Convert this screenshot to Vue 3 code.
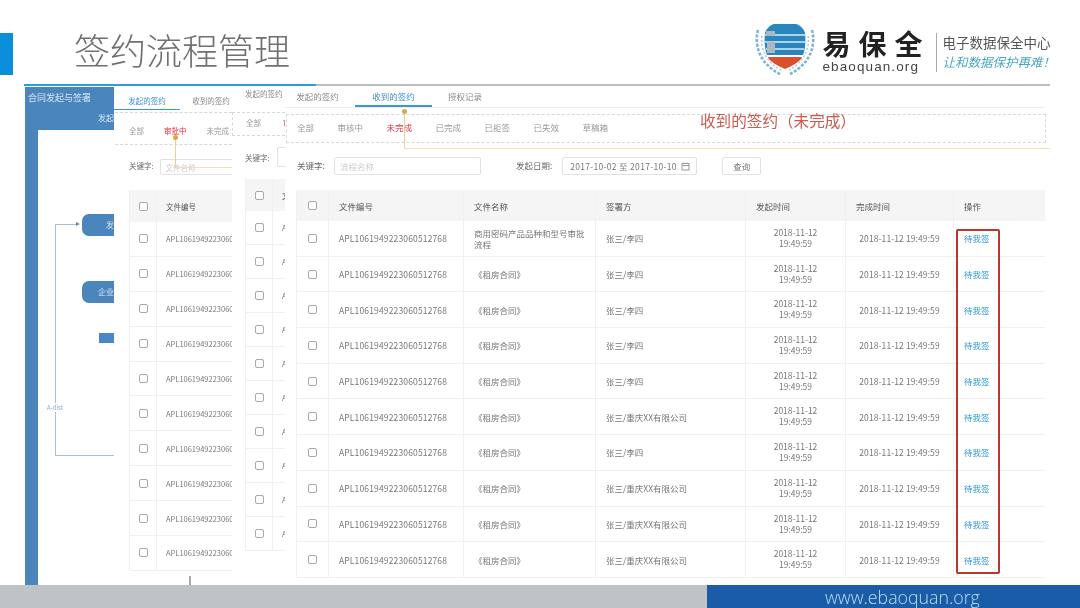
<script setup>
const ids = 'APL1061949223060512768'
const shortId = 'APL1061949223060'
const company = '张三/重庆XX有限公司'
const people = '张三/李四'

const filters = ['全部', '审核中', '未完成', '已完成', '已拒签', '已失效', '草稿箱']

const rows = [
  { name: '商用密码产品品种和型号审批流程', signer: people },
  { name: '《租房合同》', signer: people },
  { name: '《租房合同》', signer: people },
  { name: '《租房合同》', signer: people },
  { name: '《租房合同》', signer: people },
  { name: '《租房合同》', signer: company },
  { name: '《租房合同》', signer: people },
  { name: '《租房合同》', signer: company },
  { name: '《租房合同》', signer: company },
  { name: '《租房合同》', signer: company }
]
</script>

<template>
  <div class="slide">
    <header class="top">
      <div class="mark"></div>
      <h1 class="title">签约流程管理</h1>
      <div class="logo">
        <svg class="emblem" width="62" height="54" viewBox="0 0 62 54">
          <g fill="none" stroke="#7fb2d6" stroke-width="2.6" stroke-dasharray="3 1.6">
            <path d="M4 8 C0 24 6 42 26 52" />
            <path d="M58 8 C62 24 56 42 36 52" />
          </g>
          <g fill="none" stroke="#a9cbe2" stroke-width="1.6" stroke-dasharray="2 2">
            <path d="M8 14 C6 26 12 40 27 48" />
            <path d="M54 14 C56 26 50 40 35 48" />
          </g>
          <path d="M20 2 H42 C46 3 50 7 51 11 C52 20 51 28 49 33 H13 C11 28 10 20 11 11 C12 7 16 3 20 2 Z" fill="#2a86bf" />
          <path d="M11 13 H51 M11 20 H51 M12 27 H50" stroke="#d9edf7" stroke-width="1.6" />
          <path d="M12 9 H21 V14 H12 Z M13 20 H21 V31 H13 Z" fill="#a9b8c2" />
          <path d="M14 35 H48 C47 39 38 44 31 47 C24 44 15 39 14 35 Z" fill="#d9512c" />
        </svg>
        <div class="brand">
          <span class="brand-cn">易保全</span>
          <span class="brand-en">ebaoquan.org</span>
        </div>
        <div class="tagline">
          <span class="tag-top">电子数据保全中心</span>
          <span class="tag-hand">让和数据保护再难！</span>
        </div>
      </div>
    </header>
    <div class="rule"><div class="rule-on"></div></div>

    <main class="desk">
      <!-- 最底层窗口：流程图 -->
      <section class="win flow">
        <div class="flow-title">合同发起与签署</div>
        <div class="flow-body">
          <div class="flow-side"></div>
          <div class="flow-main">
            <div class="flow-bar">发起</div>
            <div class="flow-canvas">
              <div class="node node-a">发</div>
              <div class="node node-b">企业</div>
              <div class="node-c"></div>
              <div class="wire"></div>
              <div class="wire-arrow"></div>
              <span class="wire-label">A-dist</span>
            </div>
          </div>
        </div>
      </section>
      <div class="stub"></div>

      <!-- 第二层：审批中 -->
      <section class="win second">
        <div class="tabs s-tabs">
          <span class="tab s-tab on">发起的签约</span>
          <span class="tab s-tab">收到的签约</span>
        </div>
        <div class="dash s-dash">
          <span>全部</span><span class="red">审批中</span><span>未完成</span>
        </div>
        <div class="kw s-kw">
          <span class="s-kw-label">关键字:</span>
          <span class="input s-input"><i>文件名称</i></span>
        </div>
        <div class="mini s-mini">
          <div class="mini-row mini-head">
            <span class="mini-cb"><b class="cb"></b></span>
            <span class="mini-id th">文件编号</span>
          </div>
          <div v-for="n in 10" :key="n" class="mini-row">
            <span class="mini-cb"><b class="cb"></b></span>
            <span class="mini-id">{{ shortId }}</span>
          </div>
        </div>
        <div class="pin s-pin"></div>
      </section>

      <!-- 第三层：只露出一条 -->
      <section class="win third">
        <div class="t-tab">发起的签约</div>
        <div class="dash t-dash"><span>全部</span><span class="red">审</span></div>
        <div class="kw t-kw">
          <span>关键字:</span>
          <span class="input t-input"></span>
        </div>
        <div class="mini t-mini">
          <div class="mini-row mini-head">
            <span class="mini-cb"><b class="cb"></b></span>
            <span class="mini-id th">文</span>
          </div>
          <div v-for="n in 10" :key="n" class="mini-row">
            <span class="mini-cb"><b class="cb"></b></span>
            <span class="mini-id">A</span>
          </div>
        </div>
      </section>

      <!-- 最上层：收到的签约 -->
      <section class="win front">
        <div class="tabs f-tabs">
          <span class="tab f-tab">发起的签约</span>
          <span class="tab f-tab on">收到的签约</span>
          <span class="tab f-tab">授权记录</span>
        </div>
        <div class="dash f-dash">
          <span v-for="(f, i) in filters" :key="f" :class="{ red: i === 2 }">{{ f }}</span>
        </div>
        <div class="f-search">
          <span class="f-label">关键字:</span>
          <span class="input f-input"><i>流程名称</i></span>
          <span class="f-label f-date-label">发起日期:</span>
          <span class="input f-date">
            2017-10-02 至 2017-10-10
            <svg width="9" height="9" viewBox="0 0 9 9" fill="none" stroke="#999">
              <rect x="1" y="1.5" width="7" height="6.5" />
              <path d="M1 3.5 H8 M3 .5 V2 M6 .5 V2" />
            </svg>
          </span>
          <span class="input f-btn">查询</span>
        </div>
        <div class="grid">
          <div class="g-row g-head">
            <span class="g-cb"><b class="cb"></b></span>
            <span>文件编号</span>
            <span>文件名称</span>
            <span>签署方</span>
            <span>发起时间</span>
            <span>完成时间</span>
            <span>操作</span>
          </div>
          <div v-for="(r, i) in rows" :key="i" class="g-row">
            <span class="g-cb"><b class="cb"></b></span>
            <span class="g-id">{{ ids }}</span>
            <span class="g-name">{{ r.name }}</span>
            <span>{{ r.signer }}</span>
            <span class="g-start">2018-11-12<br />19:49:59</span>
            <span class="g-end">2018-11-12 19:49:59</span>
            <span class="g-op">待我签</span>
          </div>
        </div>
        <div class="pin f-pin"></div>
        <div class="note">收到的签约（未完成）</div>
        <div class="mark-box"></div>
      </section>
    </main>

    <footer class="foot">
      <div class="foot-grey"></div>
      <div class="foot-blue">www.ebaoquan.org</div>
    </footer>
  </div>
</template>

<style scoped>
.slide {
  position: relative;
  width: 1080px;
  height: 608px;
  overflow: hidden;
  display: flex;
  flex-direction: column;
  background: #fff;
  font-family: "Noto Sans CJK SC", "Noto Sans", sans-serif;
  color: #666;
  filter: blur(0.35px);
}

/* Header */
.top {
  height: 84px;
  display: flex;
  flex-shrink: 0;
}
.mark {
  width: 13px;
  height: 42px;
  margin-top: 33px;
  background: #0b8fdc;
}
.title {
  margin: 27px 0 0 61px;
  font-size: 36px;
  line-height: 44px;
  font-weight: 300;
  color: #707070;
}
.logo {
  margin-left: auto;
  margin-right: 25px;
  display: flex;
  height: 62px;
  margin-top: 20px;
}
.emblem { margin: 2px 6px 0 0; }
.brand {
  display: flex;
  flex-direction: column;
  width: 104px;
  padding-top: 7px;
}
.brand-cn {
  font-size: 28px;
  line-height: 32px;
  font-weight: 700;
  letter-spacing: 8px;
  color: #222;
  white-space: nowrap;
}
.brand-en {
  font-family: "Liberation Sans", sans-serif;
  font-size: 13.5px;
  line-height: 15px;
  letter-spacing: 1.1px;
  color: #444;
  white-space: nowrap;
}
.tagline {
  margin: 13px 0 0 10px;
  padding-left: 5px;
  height: 39px;
  border-left: 1px solid #aaa;
  display: flex;
  flex-direction: column;
}
.tag-top {
  font-size: 13.5px;
  line-height: 18px;
  color: #555;
  white-space: nowrap;
}
.tag-hand {
  font-size: 12.5px;
  line-height: 22px;
  font-style: italic;
  color: #4aa6bd;
  white-space: nowrap;
}

.rule {
  height: 2px;
  margin: 0 30px 0 24px;
  background: #bcbcbc;
  flex-shrink: 0;
}
.rule-on {
  width: 292px;
  height: 2px;
  background: #2a9fd8;
}

/* Desk */
.desk {
  position: relative;
  flex: 1;
}
.win {
  position: absolute;
  top: 0;
  background: #fff;
  overflow: hidden;
}
.red { color: #e0333c; }

/* Flow window */
.flow {
  left: 25px;
  top: 1px;
  width: 89px;
  height: 498px;
  display: flex;
  flex-direction: column;
  background: #fff;
}
.flow-title {
  height: 23px;
  line-height: 21px;
  padding-left: 3px;
  background: #4a86bc;
  color: #d7e6f3;
  font-size: 9px;
  white-space: nowrap;
}
.flow-body {
  flex: 1;
  display: flex;
}
.flow-side {
  width: 13px;
  background: #4a86bc;
}
.flow-main {
  flex: 1;
  display: flex;
  flex-direction: column;
}
.flow-bar {
  height: 20px;
  line-height: 16px;
  text-align: right;
  background: #4a86bc;
  color: #d7e6f3;
  font-size: 8px;
  white-space: nowrap;
}
.flow-canvas {
  position: relative;
  flex: 1;
}
.node {
  position: absolute;
  left: 44px;
  width: 32px;
  height: 22px;
  line-height: 22px;
  padding-left: 24px;
  box-sizing: border-box;
  border-radius: 7px 0 0 7px;
  background: #4a86bc;
  color: #d7e6f3;
  font-size: 8px;
  white-space: nowrap;
  overflow: hidden;
}
.node-a { top: 84px; }
.node-b { top: 151px; padding-left: 16px; }
.node-c {
  position: absolute;
  left: 61px;
  top: 203px;
  width: 15px;
  height: 10px;
  background: #4a86c8;
}
.wire {
  position: absolute;
  left: 17px;
  top: 94px;
  width: 59px;
  height: 232px;
  box-sizing: border-box;
  border-left: 1px solid #a9bfd2;
  border-bottom: 1px solid #a9bfd2;
}
.wire::before {
  content: "";
  position: absolute;
  left: 0;
  top: 0;
  width: 22px;
  height: 1px;
  background: #a9bfd2;
}
.wire-arrow {
  position: absolute;
  left: 38px;
  top: 92px;
  border-left: 4px solid #6b8aa5;
  border-top: 2.5px solid transparent;
  border-bottom: 2.5px solid transparent;
}
.wire-label {
  position: absolute;
  left: 8px;
  top: 273px;
  padding: 0 1px;
  background: #fff;
  font-size: 6px;
  line-height: 9px;
  color: #8fa9c4;
}
.stub {
  position: absolute;
  left: 189px;
  top: 489px;
  width: 2px;
  height: 10px;
  background: #a8a8a8;
}

/* Shared bits */
.tabs { display: flex; }
.tab {
  font-size: 8.5px;
  text-align: center;
  color: #8a8a8a;
  white-space: nowrap;
}
.tab.on {
  color: #3f8fc8;
  border-bottom: 1px solid #3f95cf;
}
.dash {
  display: flex;
  align-items: center;
  box-sizing: border-box;
  border-top: 1px dashed #d8d8d8;
  border-bottom: 1px dashed #d8d8d8;
  font-size: 8.5px;
  color: #999;
  white-space: nowrap;
}
.kw {
  display: flex;
  align-items: center;
  font-size: 8.5px;
  color: #666;
  white-space: nowrap;
}
.input {
  display: flex;
  align-items: center;
  box-sizing: border-box;
  border: 1px solid #e2e2e2;
  border-radius: 2px;
  background: #fff;
  font-size: 8.5px;
  color: #777;
  white-space: nowrap;
}
.input i {
  font-style: normal;
  color: #ccc;
}
.cb {
  display: block;
  width: 9px;
  height: 9px;
  box-sizing: border-box;
  border: 1px solid #a8a8a8;
  border-radius: 2px;
  background: #fff;
}
.pin {
  position: absolute;
  border-left: 1px solid #eccf8e;
  border-bottom: 1px solid #f3e0b5;
}
.pin::before {
  content: "";
  position: absolute;
  left: -3px;
  top: -2px;
  width: 5px;
  height: 5px;
  border-radius: 50%;
  background: #d3ab45;
}

/* Small clipped tables */
.mini-row {
  display: flex;
  align-items: stretch;
  border-bottom: 1px solid #f0f0f0;
  font-size: 7.5px;
  color: #777;
  white-space: nowrap;
}
.mini-head {
  background: #f5f5f5;
  border-bottom: 0;
}
.mini-cb {
  display: flex;
  align-items: center;
  justify-content: center;
  border-left: 1px solid #f0f0f0;
  border-right: 1px solid #f0f0f0;
  flex-shrink: 0;
}
.mini-id {
  display: flex;
  align-items: center;
  padding-left: 9px;
}
.th { color: #555; }

/* Second window */
.second {
  left: 114px;
  width: 118px;
  height: 490px;
}
.s-tabs { height: 24px; }
.s-tab {
  line-height: 29px;
  width: 66px;
  box-sizing: border-box;
  font-size: 7.5px;
}
.s-tab + .s-tab { margin-left: 11px; width: 40px; }
.s-dash {
  height: 33px;
  margin-top: 2px;
  margin-left: 1px;
  padding: 4px 0 0 14px;
  gap: 20px;
  font-size: 7.5px;
}
.s-dash span { flex-shrink: 0; }
.s-kw {
  margin: 14px 0 0 15px;
  height: 16px;
  gap: 6px;
  font-size: 7.5px;
}
.s-kw-label { padding-bottom: 3px; }
.s-input {
  width: 80px;
  height: 16px;
  padding-left: 5px;
  flex-shrink: 0;
  font-size: 7.5px;
}
.s-mini {
  margin: 15px 0 0 15px;
  width: 120px;
}
.s-mini .mini-row { height: 34.9px; box-sizing: border-box; }
.s-mini .mini-head { height: 32px; }
.s-mini .mini-cb { width: 26px; }
.s-pin {
  left: 61px;
  top: 51px;
  width: 60px;
  height: 30px;
}

/* Third window */
.third {
  left: 232px;
  width: 53px;
  height: 470px;
}
.t-tab {
  height: 26px;
  line-height: 15px;
  padding-left: 13px;
  font-size: 7.5px;
  color: #8a8a8a;
  white-space: nowrap;
}
.t-dash {
  height: 24px;
  padding: 0 0 3px 13px;
  gap: 22px;
  font-size: 7.5px;
  border-left: 1px dashed #d8d8d8;
}
.t-dash span { flex-shrink: 0; }
.t-kw {
  margin: 11px 0 0 13px;
  height: 20px;
  gap: 7px;
  font-size: 7.5px;
}
.t-input {
  width: 30px;
  height: 20px;
  flex-shrink: 0;
}
.t-mini {
  margin: 12px 0 0 13px;
  width: 45px;
}
.t-mini .mini-row { height: 34px; box-sizing: border-box; }
.t-mini .mini-head { height: 32px; }
.t-mini .mini-cb { width: 26px; }

/* Front window */
.front {
  left: 285px;
  width: 765px;
  height: 499px;
}
.f-tabs {
  height: 21px;
  margin-right: 5px;
  border-bottom: 1px solid #eee;
}
.f-tab {
  height: 21px;
  line-height: 21px;
  box-sizing: border-box;
}
.f-tab:nth-child(1) { width: 65px; }
.f-tab:nth-child(2) { width: 77px; margin-left: 5px; border-bottom-width: 2px; }
.f-tab:nth-child(3) { width: 50px; margin-left: 8px; }
.f-dash {
  height: 29px;
  margin: 6px 4px 0 1px;
  padding: 0 0 3px 10px;
  gap: 23.5px;
  border-left: 1px dashed #d8d8d8;
  border-right: 1px dashed #d8d8d8;
  font-size: 8.5px;
}
.f-search {
  display: flex;
  align-items: center;
  margin: 14px 0 0 12px;
  height: 18px;
  font-size: 8.5px;
}
.f-label {
  padding-bottom: 2px;
  color: #666;
  white-space: nowrap;
}
.f-input {
  width: 147px;
  height: 18px;
  margin-left: 9px;
  padding-left: 5px;
}
.f-date-label { margin-left: 35px; }
.f-date {
  width: 135px;
  height: 18px;
  margin-left: 10px;
  padding: 0 6px 0 7px;
  justify-content: space-between;
  letter-spacing: .3px;
}
.f-btn {
  width: 39px;
  height: 18px;
  margin-left: 25px;
  justify-content: center;
}
.grid {
  margin: 15px 0 0 11px;
  width: 749px;
}
.g-row {
  display: grid;
  grid-template-columns: 32px 135px 132px 150px 100px 108px 92px;
  height: 35.7px;
  box-sizing: border-box;
  border-bottom: 1px solid #f0f0f0;
  font-size: 8.5px;
  color: #777;
}
.g-row > span {
  display: flex;
  align-items: center;
  padding: 1px 0 0 10px;
  border-left: 1px solid #f0f0f0;
  line-height: 11px;
}
.g-row > .g-cb {
  padding: 0;
  justify-content: center;
}
.g-row > .g-id { letter-spacing: .15px; }
.g-head {
  height: 31px;
  background: #f5f5f5;
  color: #555;
  border-bottom: 0;
}
.g-head > span { padding-top: 2px; }
.g-row > .g-name { padding-right: 8px; }
.g-row > .g-start {
  display: block;
  padding: 6px 0 0;
  text-align: center;
}
.g-row > .g-end {
  padding: 1px 0 0;
  justify-content: center;
  letter-spacing: .1px;
}
.g-op { color: #2b96d8; }
.f-pin {
  left: 119px;
  top: 25px;
  width: 700px;
  height: 37px;
}
.note {
  position: absolute;
  left: 415px;
  top: 25px;
  font-size: 15.6px;
  line-height: 18px;
  color: #cb5a4e;
  white-space: nowrap;
}
.mark-box {
  position: absolute;
  left: 671px;
  top: 143px;
  width: 44px;
  height: 345px;
  box-sizing: border-box;
  border: 2px solid #b8382f;
  border-radius: 2px;
}

/* Footer */
.foot {
  height: 23px;
  display: flex;
  flex-shrink: 0;
}
.foot-grey {
  width: 707px;
  background: #bfc3c8;
}
.foot-blue {
  flex: 1;
  padding-left: 118px;
  line-height: 25px;
  background: #1a5ca8;
  color: #b9dff6;
  font-family: "Open Sans", sans-serif;
  font-size: 17.8px;
  font-weight: 300;
  white-space: nowrap;
}
</style>
